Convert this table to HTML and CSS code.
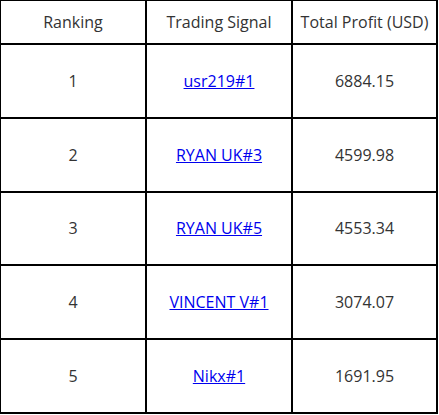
FILE: index.html
```html
<!DOCTYPE html>
<html>
<head>
<meta charset="utf-8">
<link rel="stylesheet" href="styles.css">
</head>
<body>
<table class="rank-table">
  <thead>
    <tr>
      <th class="col-rank">Ranking</th>
      <th class="col-signal">Trading Signal</th>
      <th class="col-profit">Total Profit (USD)</th>
    </tr>
  </thead>
  <tbody>
    <tr>
      <td>1</td>
      <td><a href="#">usr219#1</a></td>
      <td>6884.15</td>
    </tr>
    <tr>
      <td>2</td>
      <td><a href="#">RYAN UK#3</a></td>
      <td>4599.98</td>
    </tr>
    <tr>
      <td>3</td>
      <td><a href="#">RYAN UK#5</a></td>
      <td>4553.34</td>
    </tr>
    <tr>
      <td>4</td>
      <td><a href="#">VINCENT V#1</a></td>
      <td>3074.07</td>
    </tr>
    <tr>
      <td>5</td>
      <td><a href="#">Nikx#1</a></td>
      <td>1691.95</td>
    </tr>
  </tbody>
</table>
</body>
</html>
```
FILE: styles.css
```css
html, body {
  margin: 0;
  padding: 0;
  background: #ffffff;
}

body {
  font-family: "Open Sans", "Noto Sans", sans-serif;
  font-size: 16px;
  color: #333333;
}

.rank-table {
  border-collapse: separate;
  border-spacing: 0;
  table-layout: fixed;
  width: 438px;
}

.rank-table th,
.rank-table td {
  border-right: 2px solid #000;
  border-bottom: 2px solid #000;
  text-align: center;
  vertical-align: middle;
  padding: 0;
  font-weight: normal;
}

.rank-table th {
  border-top: 1px solid #000;
  height: 42px;
}

.rank-table td {
  height: 71.8px;
}

.rank-table th:first-child,
.rank-table td:first-child {
  border-left: 1px solid #000;
}

.col-rank { width: 144px; }
.col-signal { width: 144px; }
.col-profit { width: 143px; }

.rank-table a {
  color: #0000ee;
  text-decoration: underline;
}
```
